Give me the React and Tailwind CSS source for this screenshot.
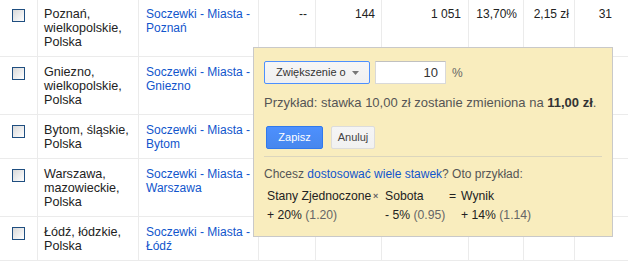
import React from 'react'

const rows = [
  { loc: 'Poznań, wielkopolskie, Polska', city: 'Poznań', vals: ['--', '144', '1\u00a0051', '13,70%', '2,15 zł', '31'] },
  { loc: 'Gniezno, wielkopolskie, Polska', city: 'Gniezno' },
  { loc: 'Bytom, śląskie, Polska', city: 'Bytom' },
  { loc: 'Warszawa, mazowieckie, Polska', city: 'Warszawa' },
  { loc: 'Łódź, łódzkie, Polska', city: 'Łódź' },
]

const numPad = ['pr-[8px]', 'pr-[6px]', 'pr-[7px]', 'pr-[6px]', 'pr-[5px]', 'pr-[16px]']

function Row({ row, first }) {
  const pad = first ? 'pt-[7px] pb-[7px]' : 'pt-[8px] pb-[7px]'
  const cell = `border-b border-[#ebebeb] ${pad}`
  const vals = row.vals || ['', '', '', '', '', '']
  return (
    <div className="grid grid-cols-[38px_101px_120px_57px_66px_87px_55px_51px_53px] leading-[14px]">
      <div className={`${cell} border-r flex justify-center`}>
        <span className="mt-[2px] block w-[13px] h-[13px] border border-[#1f4e80] bg-gradient-to-br from-[#d9d9d9] to-white" />
      </div>
      <div className={`${cell} border-r pl-[6px] pr-[2px] text-[12.6px] text-[#222]`}>{row.loc}</div>
      <div className={`${cell} border-r pl-[7px] pr-[2px] text-[12px] text-[#15c]`}>
        Soczewki - Miasta - {row.city}
      </div>
      {vals.map((v, i) => (
        <div
          key={i}
          className={`${cell} ${i < 5 ? 'border-r' : ''} ${numPad[i]} text-right text-[12px] text-[#222] whitespace-nowrap`}
        >
          {v}
        </div>
      ))}
    </div>
  )
}

function BidPopup() {
  return (
    <div className="absolute left-[253px] top-[47px] w-[360px] border border-[#c9c9c9] bg-[#f9edbe] pt-[13px] px-[10px] pb-[11px]">
      <div className="flex items-center h-[23px]">
        <button className="flex items-center h-[23px] w-[106px] border border-[#4d90fe] rounded-[2px] bg-gradient-to-b from-[#f6f6f6] to-[#f0f0f0] pl-[11px] text-[11px] text-[#333]">
          Zwiększenie o
          <svg className="ml-[6px]" width="7" height="4" viewBox="0 0 7 4">
            <path d="M0 0h7L3.5 4z" fill="#777" />
          </svg>
        </button>
        <div className="ml-[5px] h-[23px] w-[71px] border border-[#d9d9d9] border-t-[#c0c0c0] bg-white text-right pr-[7px] text-[13px] leading-[21px] text-[#333]">
          10
        </div>
        <span className="ml-[6px] text-[12px] text-[#666]">%</span>
      </div>

      <p className="mt-[11px] text-[13px] leading-[16px] text-[#555]">
        Przykład: stawka 10,00 zł zostanie zmieniona na <b className="text-[#333]">11,00 zł</b>.
      </p>

      <div className="mt-[15px] ml-[2px] flex gap-[8px]">
        <button className="h-[23px] w-[57px] rounded-[2px] border border-[#3079ed] bg-gradient-to-b from-[#4d90fe] to-[#4787ed] text-[11px] text-white">
          Zapisz
        </button>
        <button className="h-[23px] w-[44px] rounded-[2px] border border-[#dcdcdc] bg-gradient-to-b from-[#f5f5f5] to-[#f1f1f1] text-[11px] text-[#444]">
          Anuluj
        </button>
      </div>

      <div className="mt-[7px] h-px bg-[#dcd6bd]" />

      <p className="mt-[10px] text-[12px] leading-[15px] text-[#555]">
        Chcesz <a className="text-[#15c]">dostosować wiele stawek</a>? Oto przykład:
      </p>

      <div className="mt-[5px] ml-[3px] grid grid-cols-[106px_12px_64px_12px_auto] text-[12.2px] leading-[19px] text-[#222]">
        <span className="whitespace-nowrap">Stany Zjednoczone</span>
        <span className="text-[9px] font-bold text-[#666]">×</span>
        <span>Sobota</span>
        <span>=</span>
        <span>Wynik</span>
        <span>
          + 20% <span className="text-[#666]">(1.20)</span>
        </span>
        <span />
        <span className="whitespace-nowrap">
          - 5% <span className="text-[#666]">(0.95)</span>
        </span>
        <span />
        <span className="whitespace-nowrap">
          + 14% <span className="text-[#666]">(1.14)</span>
        </span>
      </div>
    </div>
  )
}

export default function App() {
  return (
    <div className="relative w-[628px] h-[261px] overflow-hidden bg-white font-['Liberation_Sans',Arial,sans-serif]">
      {rows.map((r, i) => (
        <Row key={i} row={r} first={i === 0} />
      ))}
      <BidPopup />
    </div>
  )
}
